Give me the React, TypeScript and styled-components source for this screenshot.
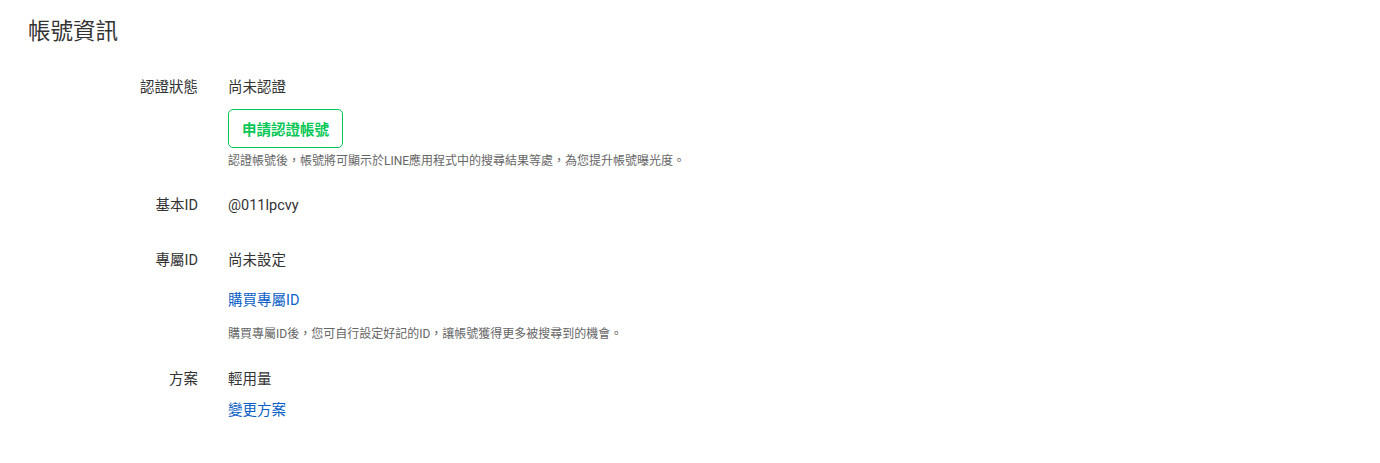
import styled, { createGlobalStyle } from "styled-components";

const GlobalStyle = createGlobalStyle`
  html, body {
    margin: 0;
    padding: 0;
    background: #ffffff;
  }
  body {
    font-family: Roboto, "Noto Sans CJK TC", sans-serif;
    color: #333333;
  }
`;

const Page = styled.div`
  width: 1380px;
  height: 463px;
  box-sizing: border-box;
  padding: 17px 28px 0;
`;

const Title = styled.h2`
  margin: 0;
  font-size: 22.5px;
  font-weight: 400;
  line-height: 28px;
  color: #333333;
`;

const Info = styled.div`
  margin-top: 33px;
  display: flex;
  flex-direction: column;
`;

const Row = styled.div<{ $space?: number }>`
  display: grid;
  grid-template-columns: 170px 1fr;
  column-gap: 30px;
  margin-bottom: ${(p) => p.$space ?? 28}px;
`;

const Label = styled.div`
  text-align: right;
  font-size: 14.5px;
  line-height: 20px;
  color: #333333;
`;

const Value = styled.div`
  display: flex;
  flex-direction: column;
  align-items: flex-start;
`;

const Text = styled.div`
  font-size: 14.5px;
  line-height: 20px;
  color: #333333;
`;

const OutlineButton = styled.button`
  margin-top: 11px;
  height: 39px;
  width: 115px;
  padding: 0;
  border: 1px solid #06c755;
  border-radius: 5px;
  background: #ffffff;
  color: #06c755;
  font-family: Roboto, "Noto Sans CJK TC", sans-serif;
  font-size: 14.5px;
  font-weight: 700;
  cursor: pointer;
`;

const Link = styled.a<{ $gap?: number }>`
  margin-top: ${(p) => p.$gap ?? 11}px;
  font-size: 14.5px;
  line-height: 20px;
  color: #0b5fc6;
  text-decoration: none;
  cursor: pointer;
`;

const Help = styled.div<{ $gap?: number }>`
  margin-top: ${(p) => p.$gap ?? 5}px;
  font-size: 12px;
  line-height: 16px;
  color: #666666;
`;

export default function App() {
  return (
    <>
      <GlobalStyle />
      <Page>
        <Title>帳號資訊</Title>
        <Info>
          <Row $space={27}>
            <Label>認證狀態</Label>
            <Value>
              <Text>尚未認證</Text>
              <OutlineButton>申請認證帳號</OutlineButton>
              <Help>
                認證帳號後，帳號將可顯示於LINE應用程式中的搜尋結果等處，為您提升帳號曝光度。
              </Help>
            </Value>
          </Row>
          <Row $space={35}>
            <Label>基本ID</Label>
            <Value>
              <Text>@011lpcvy</Text>
            </Value>
          </Row>
          <Row $space={28}>
            <Label>專屬ID</Label>
            <Value>
              <Text>尚未設定</Text>
              <Link $gap={20}>購買專屬ID</Link>
              <Help $gap={15}>
                購買專屬ID後，您可自行設定好記的ID，讓帳號獲得更多被搜尋到的機會。
              </Help>
            </Value>
          </Row>
          <Row>
            <Label>方案</Label>
            <Value>
              <Text>輕用量</Text>
              <Link>變更方案</Link>
            </Value>
          </Row>
        </Info>
      </Page>
    </>
  );
}
